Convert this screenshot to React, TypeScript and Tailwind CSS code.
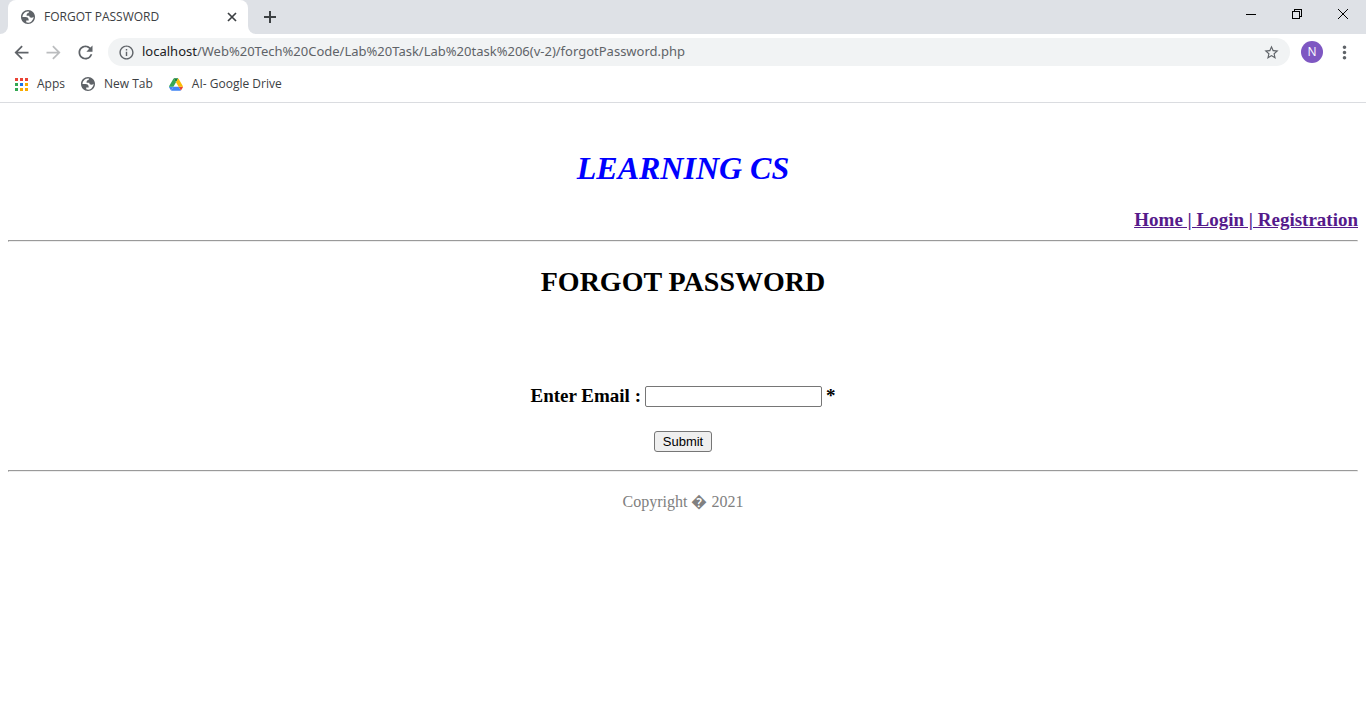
import type { ReactNode } from "react";
import {
  MdArrowBack,
  MdArrowForward,
  MdInfoOutline,
  MdMoreVert,
  MdRefresh,
  MdStarBorder,
} from "react-icons/md";

function Globe() {
  return (
    <svg width="14" height="14" viewBox="2 2 20 20" aria-hidden="true" className="shrink-0">
      <path
        fill="#5f6368"
        fillRule="evenodd"
        d="M12 2C6.48 2 2 6.48 2 12s4.48 10 10 10 10-4.48 10-10S17.52 2 12 2zM4 12h4.4c3.407.022 4.922 1.73 4.543 5.127H9.488v2.47a8.004 8.004 0 0 0 10.498-8.083C19.327 12.504 18.332 13 17 13c-2.137 0-3.206-.916-3.206-2.75h-3.748c-.274-2.728.683-4.092 2.870-4.092 0-.975.327-1.597.811-1.970A8.004 8.004 0 0 0 4 12z"
      />
    </svg>
  );
}

const appDots = [
  "#ea4335", "#ea4335", "#ea4335",
  "#34a853", "#1a73e8", "#f9ab00",
  "#34a853", "#f9ab00", "#f9ab00",
];

function AppsIcon() {
  return (
    <svg width="13" height="13" viewBox="0 0 13 13" shapeRendering="crispEdges" aria-hidden="true">
      {appDots.map((fill, i) => (
        <rect key={i} x={(i % 3) * 5} y={Math.floor(i / 3) * 5} width="3" height="3" fill={fill} />
      ))}
    </svg>
  );
}

function DriveIcon() {
  return (
    <svg width="14" height="13" viewBox="0 0 87.3 78" aria-hidden="true">
      <path d="m6.600 66.850 3.850 6.650c.8 1.400 1.950 2.500 3.300 3.300l13.750-23.800h-27.500c0 1.550.4 3.100 1.200 4.500z" fill="#4285f4" />
      <path d="m43.650 25-13.750-23.800c-1.350.8-2.500 1.900-3.300 3.300l-25.400 44a9.060 9.060 0 0 0 -1.200 4.500h27.500z" fill="#34a853" />
      <path d="m73.550 76.800c1.350-.8 2.500-1.900 3.300-3.300l1.600-2.750 7.650-13.250c.8-1.400 1.200-2.950 1.200-4.500h-27.502l5.852 11.500z" fill="#ea4335" />
      <path d="m43.650 25 13.750-23.800c-1.350-.8-2.900-1.200-4.500-1.200h-18.500c-1.600 0-3.150.45-4.500 1.200z" fill="#188038" />
      <path d="m59.800 53h-32.300l-13.750 23.800c1.350.8 2.900 1.200 4.500 1.200h50.800c1.600 0 3.150-.45 4.500-1.200z" fill="#4285f4" />
      <path d="m73.400 26.500-12.700-22c-.8-1.400-1.950-2.500-3.300-3.300l-13.750 23.800 16.150 28h27.450c0-1.550-.4-3.100-1.200-4.500z" fill="#fbbc04" />
    </svg>
  );
}

function Bookmark({ icon, children }: { icon: ReactNode; children: ReactNode }) {
  return (
    <a href="#" className="flex items-center gap-[9px] text-xs text-[#3c4043]">
      {icon}
      {children}
    </a>
  );
}

function TabStrip() {
  return (
    <div className="flex h-[34px] justify-between bg-[#dee1e6]">
      <div className="flex">
        <div className="h-full w-2 bg-white">
          <div className="h-full rounded-br-lg bg-[#dee1e6]" />
        </div>
        <div className="flex w-60 items-center gap-[9px] rounded-t-lg bg-white pr-[9px] pl-[13px] text-xs text-[#3c4043]">
          <Globe />
          <span className="grow">FORGOT PASSWORD</span>
          <button aria-label="Close tab" className="text-[#3c4043]">
            <svg width="14" height="14" stroke="currentColor" strokeWidth="1.7">
              <path d="M3 3 11 11M11 3 3 11" />
            </svg>
          </button>
        </div>
        <div className="h-full w-2 bg-white">
          <div className="h-full rounded-bl-lg bg-[#dee1e6]" />
        </div>
        <button aria-label="New tab" className="pl-1 text-[#3c4043]">
          <svg width="20" height="20" stroke="currentColor" strokeWidth="2">
            <path d="M4 10h12M10 4v12" />
          </svg>
        </button>
      </div>
      <div className="flex h-7 text-black">
        <button aria-label="Minimize" className="flex w-[46px] items-center justify-center">
          <svg width="10" height="10" shapeRendering="crispEdges"><path d="M0 5h10v1H0z" /></svg>
        </button>
        <button aria-label="Restore" className="flex w-[46px] items-center justify-center">
          <svg width="10" height="10" fill="none" stroke="currentColor" shapeRendering="crispEdges">
            <path d="M.5 2.500h7v7h-7zM2.500 2.500v-2h7v7h-2" />
          </svg>
        </button>
        <button aria-label="Close" className="flex w-[46px] items-center justify-center">
          <svg width="10" height="10" stroke="currentColor"><path d="M0 0 10 10M10 0 0 10" /></svg>
        </button>
      </div>
    </div>
  );
}

function Toolbar() {
  return (
    <div className="flex h-9 items-center pr-[11px] pl-[11px] text-[#5f6368]">
      <div className="flex items-center gap-[11px]">
        <button aria-label="Back"><MdArrowBack size={21} /></button>
        <button aria-label="Forward" className="text-[#bbbdbf]"><MdArrowForward size={21} /></button>
        <button aria-label="Reload"><MdRefresh size={21} /></button>
      </div>
      <div className="ml-3 flex h-7 grow items-center gap-[7px] rounded-full bg-[#f1f3f4] px-[10px]">
        <MdInfoOutline size={17} />
        <div className="grow font-['Noto_Sans',sans-serif] text-[13px]">
          <span className="text-[#202124]">localhost</span>/Web%20Tech%20Code/Lab%20Task/Lab%20task%206(v-2)/forgotPassword.php
        </div>
        <button aria-label="Bookmark this page"><MdStarBorder size={17} /></button>
      </div>
      <button className="ml-[11px] flex size-[22px] items-center justify-center rounded-full bg-[#7e57c2] text-xs text-white">N</button>
      <button aria-label="Menu" className="ml-[11px]"><MdMoreVert size={21} /></button>
    </div>
  );
}

function Rule() {
  return <hr className="h-[2px] border border-[#9a9a9a] border-r-[#eeeeee] border-b-[#eeeeee]" />;
}

export default function App() {
  return (
    <div className="min-h-screen bg-white">
      <header className="border-b border-[#dadce0] font-['Open_Sans',sans-serif]">
        <TabStrip />
        <Toolbar />
        <nav className="flex h-8 items-center gap-4 px-[15px] pb-1">
          <Bookmark icon={<AppsIcon />}>Apps</Bookmark>
          <Bookmark icon={<Globe />}>New Tab</Bookmark>
          <Bookmark icon={<DriveIcon />}>AI- Google Drive</Bookmark>
        </nav>
      </header>
      <main className="px-2 pt-[47px] font-['Liberation_Serif',serif] text-black">
        <h1 className="text-center text-[32px] leading-9 font-bold text-[#0000ff] italic">LEARNING CS</h1>
        <p className="mt-[22px] mb-2 text-right text-[19px] leading-6 font-bold text-[#551a8b] underline">
          <a href="#">Home | </a>
          <a href="#">Login | </a>
          <a href="#">Registration</a>
        </p>
        <Rule />
        <h2 className="mt-6 text-center text-[28px] leading-8 font-bold">FORGOT PASSWORD</h2>
        <form className="mt-[87px] mb-[18px] flex flex-col items-center gap-6" onSubmit={(e) => e.preventDefault()}>
          <div className="flex items-center gap-1 text-[19px] leading-[22px] font-bold">
            <label htmlFor="email">Enter Email :</label>
            <input id="email" type="text" className="h-[21px] w-[177px] rounded-xs border border-[#767676] bg-white px-1 font-['Liberation_Sans',sans-serif] text-[13px] font-normal" />
            <span>*</span>
          </div>
          <button type="submit" className="h-[21px] w-[58px] rounded-[3px] border border-[#767676] bg-[#efefef] font-['Liberation_Sans',sans-serif] text-[13px] leading-none">
            Submit
          </button>
        </form>
        <Rule />
        <p className="mt-5 text-center text-base leading-5 text-[#808080]">Copyright � 2021</p>
      </main>
    </div>
  );
}
